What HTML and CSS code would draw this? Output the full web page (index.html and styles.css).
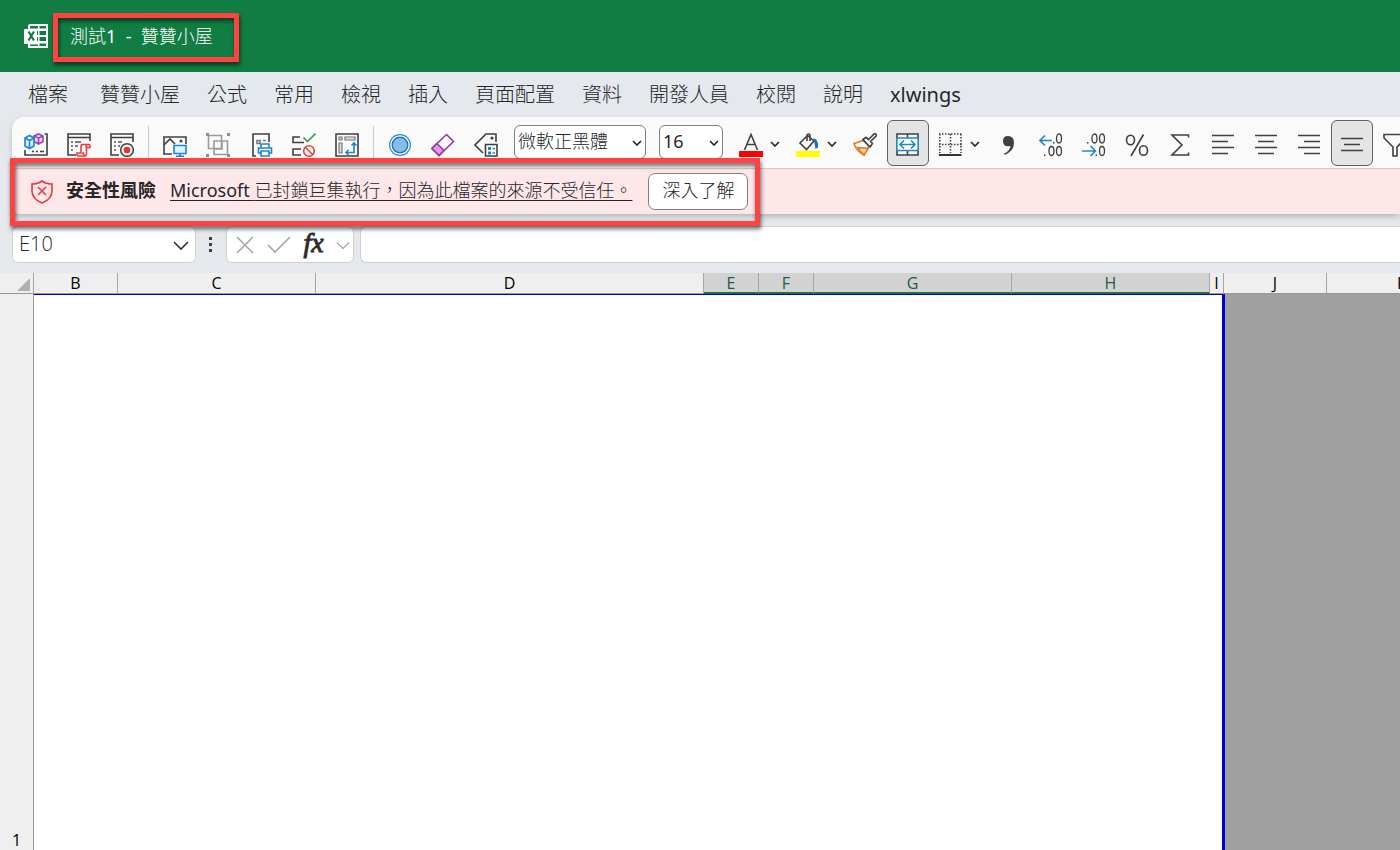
FILE: index.html
```html
<!DOCTYPE html>
<html lang="zh-Hant">
<head>
<meta charset="utf-8">
<title>測試1 - 贊贊小屋</title>
<link rel="stylesheet" href="styles.css">
</head>
<body>
<div class="app">
  <header class="titlebar">
    <svg class="logo" viewBox="0 0 24 24" width="24" height="24" aria-hidden="true">
      <path fill="#fff" d="M6 0h18v24H4v-4H1q-1 0-1-1V6q0-1 1-1h3V2q0-2 2-2z"/>
      <path fill="#117d43" d="M6 2h8v2.500H6zM15.500 2H22v2.500h-6.500zM15.500 7H22v4h-6.500zM15.500 13H22v4h-6.500zM15.500 19.500H22V22h-6.500zM6 20.500h8V22H6z"/>
      <path fill="none" stroke="#117d43" stroke-width="2.200" d="M4.500 7.500l5.500 9M10 7.500l-5.500 9"/>
      <path fill="#117d43" d="M13 7h1v4h-1zM13 13h1v4h-1z"/>
    </svg>
    <h1 class="doc-title">測試<span class="latin">1  -  </span>贊贊小屋<span class="marker marker-title"></span></h1>
  </header>

  <nav class="tabs">
    <a href="#" class="tab tab-file">檔案</a>
    <a href="#" class="tab">贊贊小屋</a>
    <a href="#" class="tab">公式</a>
    <a href="#" class="tab">常用</a>
    <a href="#" class="tab">檢視</a>
    <a href="#" class="tab">插入</a>
    <a href="#" class="tab">頁面配置</a>
    <a href="#" class="tab">資料</a>
    <a href="#" class="tab">開發人員</a>
    <a href="#" class="tab">校閱</a>
    <a href="#" class="tab">說明</a>
    <a href="#" class="tab latin">xlwings</a>
  </nav>

  <div class="panel">
    <div class="toolbar">
      <button class="tool" aria-label="增益集"><svg class="icon" viewBox="0 0 24 24">
        <path d="M20.500 1H23v21H1v-5M8 18.500h2M12 18.500h2M16 18.500h4" stroke="#404040"/>
        <path d="M10 3l4.500-2L19 3v5.500l-4.500 2.500L10 8.500zM10 3l4.500 2L19 3M14.500 5v6" fill="#f0dcf5" stroke="#a33fb5"/>
        <path d="M1 5l4.500-2.500L10 5v8l-4.500 2.500L1 13zM1 5l4.500 2.500L10 5M5.500 7.500v8" fill="#d9edf9" stroke="#1b87cc"/>
      </svg></button>
      <button class="tool" aria-label="檢視程式碼"><svg class="icon" viewBox="0 0 24 24">
        <path d="M9 22H1V1h22v7M1 4.500h22" stroke="#404040"/>
        <path d="M4 9h2M8 9h6M4 13h2M8 13h3M4 17h2" stroke="#555"/>
        <path d="M14 11.500h7.500q2 0 1.500 3h-3.500v6q0 2.500-2 2.500h-6q-2 0-1.500-3h4v-6q0-2.500 2-2.500zM15 20h1.500q0 3 2 3M19 14.500q0-3 2-3" fill="#fff" stroke="#ee3b3b"/>
      </svg></button>
      <button class="tool" aria-label="錄製巨集"><svg class="icon" viewBox="0 0 24 24">
        <path d="M9 22H1V1h22v8M1 4.500h22" stroke="#404040"/>
        <path d="M4 9h2M8 9h4M4 13h2M8 13h2M4 17h2" stroke="#555"/>
        <circle cx="17" cy="17" r="6.300" fill="#fff" stroke="#404040" stroke-width="1.500"/>
        <circle cx="17" cy="17" r="3.300" fill="#ee3131"/>
      </svg></button>
      <span class="sep"></span>
      <button class="tool" aria-label="攝影"><svg class="icon" viewBox="0 0 24 24">
        <path d="M9 21H1V4h22v7M1 12l6-6 5 5" stroke="#404040"/>
        <circle cx="18" cy="8" r="1.500" fill="#404040"/>
        <path d="M11 12.500h12v8H11z" fill="#dff1fc" stroke="#1b87cc"/><path d="M17 21v2M13 23.200h8" stroke="#1b87cc"/>
      </svg></button>
      <button class="tool" aria-label="群組"><svg class="icon" viewBox="0 0 24 24">
        <path d="M2.500 2.500h13v13h-13zM8 8h8v8H8zM8 8h13.500v13.500H8z" stroke="#9a9a9a"/>
        <path d="M0 0h3v3H0zM21 0h3v3h-3zM0 21h3v3H0zM21 21h3v3h-3z" fill="#8f8f8f"/>
      </svg></button>
      <button class="tool" aria-label="列印"><svg class="icon" viewBox="0 0 24 24">
        <path d="M7 23H4V1h16v8" stroke="#404040"/>
        <path d="M8 7.500h3v3H8zM14 7.500h3" stroke="#777"/>
        <path d="M12 15v-4h8v4M12 20H9.500v-5h13v5H20M12 18h8v5h-8z" fill="#fff" stroke="#1b87cc"/>
      </svg></button>
      <button class="tool" aria-label="核取"><svg class="icon" viewBox="0 0 24 24">
        <path d="M8 4H1v5.500h11M9 16H1v6h8" stroke="#404040"/>
        <path d="M11.500 4.500l4 4L23.500.500" stroke="#34a05a"/>
        <circle cx="17" cy="18" r="5.300" fill="#fff" stroke="#ee3b3b"/><path d="M13.200 14.200l7.600 7.600" stroke="#ee3b3b"/>
      </svg></button>
      <button class="tool" aria-label="樞紐分析表"><svg class="icon" viewBox="0 0 24 24">
        <path d="M1 1h22v22H1z" stroke="#404040"/>
        <path d="M4 4h3v3H4zM10 4h10v3H10zM4 10h3v10H4z" fill="#ddd" stroke="#777" stroke-width="1.200"/>
        <path d="M19 10v9.500h-8M16.500 12.500L19 10l2.500 2.500M13.500 17L11 19.500l2.500 2.500" stroke="#1b87cc"/>
      </svg></button>
      <span class="sep"></span>
      <button class="tool" aria-label="圖形"><svg class="icon" viewBox="0 0 24 24">
        <circle cx="12" cy="12" r="10.400" fill="#fff" stroke="#2b8fd0" stroke-width="1.200"/>
        <circle cx="12" cy="12" r="7.800" fill="#83bdec" stroke="#1b75bb" stroke-width="1.400"/>
      </svg></button>
      <button class="tool" aria-label="清除"><svg class="icon" viewBox="0 0 24 24">
        <path d="M15.500 1.500L22.500 8.500 8 22.500 1 15.500z" fill="#fff" stroke="#9a35a5"/>
        <path d="M6 10.500l7 7-5 5-7-7z" fill="#d99be0" stroke="#9a35a5"/>
      </svg></button>
      <button class="tool" aria-label="標籤"><svg class="icon" viewBox="0 0 24 24">
        <path d="M9 20L1 12 12 1h10v8" stroke="#404040"/>
        <circle cx="18" cy="5" r="1.600" fill="#404040"/>
        <path d="M11.500 11.500h11.500V23H11.500z" fill="#fff" stroke="#404040"/>
        <path d="M14 14h3v3h-3zM14 18.500h3v3h-3zM18.500 14.800h2.500v1.500h-2.500zM18.500 19.300h2.500v1.500h-2.500z" fill="#1b87cc"/>
      </svg></button>
      <span class="pick pick-font">
        <select class="pick-select" aria-label="字型"><option>微軟正黑體</option></select>
        <svg class="chev pick-chev" viewBox="0 0 10 6"><path d="M1 1l4 4 4-4"/></svg>
      </span>
      <span class="pick pick-size">
        <select class="pick-select latin" aria-label="字型大小"><option>16</option></select>
        <svg class="chev pick-chev" viewBox="0 0 10 6"><path d="M1 1l4 4 4-4"/></svg>
      </span>
      <button class="tool tool-menu" aria-label="字型色彩"><svg class="icon" viewBox="0 0 24 24">
        <path d="M5.500 17L12 1.500 18.500 17M7.800 11.500h8.400" stroke="#404040"/>
        <path d="M0 18h24v6H0z" fill="#f00"/>
      </svg><svg class="chev" viewBox="0 0 10 6"><path d="M1 1l4 4 4-4"/></svg></button>
      <button class="tool tool-menu" aria-label="填滿色彩"><svg class="icon" viewBox="0 0 24 24">
        <path d="M18 8L10.500 16.500 4 10l7.500-7.500zM11 8V3q0-2 1.500-2T14 3v5" stroke="#404040"/>
        <path d="M17 5.500q5.500 0 5 9l-2.500 1.500-1-6z" fill="#1b6fb5"/>
        <path d="M0 18h24v6H0z" fill="#ff0"/>
      </svg><svg class="chev" viewBox="0 0 10 6"><path d="M1 1l4 4 4-4"/></svg></button>
      <button class="tool" aria-label="複製格式"><svg class="icon" viewBox="0 0 24 24">
        <path d="M10 7.500L1 10.500q2 7 10 11.500l5-9z" fill="#fff" stroke="#e07a1c"/>
        <path d="M5 14.500l10 1-4 6.500q-4-3-6-7.500z" fill="#fbd9a5" stroke="#e07a1c"/>
        <path d="M10 6.500l3-2.200 2.500 2.400L21 1q2-1 2.500 1.500L17.500 8.500l2 2-2.500 3.500z" fill="#fff" stroke="#404040"/>
      </svg></button>
      <button class="tool tool-on" aria-label="跨欄置中" aria-pressed="true"><svg class="icon" viewBox="0 0 24 24">
        <path d="M1 1h21v21H1zM11.500 1v21" fill="#f7f7f7" stroke="#404040"/>
        <path d="M.800 5h21.400v12.500H.800z" fill="#fff" stroke="#1b87cc"/>
        <path d="M4 11.500h15M8 7.500l-4 4 4 4M15 7.500l4 4-4 4" stroke="#1b87cc"/>
      </svg></button>
      <button class="tool tool-menu" aria-label="框線"><svg class="icon" viewBox="0 0 24 24">
        <path d="M0 1h23M0 11.500h23M.800 1v19M11.500 1v19M22 1v19" stroke="#404040" stroke-dasharray="1.500 1.500"/>
        <path d="M0 22h22.500" stroke="#000"/>
      </svg><svg class="chev" viewBox="0 0 10 6"><path d="M1 1l4 4 4-4"/></svg></button>
      <button class="tool" aria-label="千分位樣式"><svg class="icon" viewBox="0 0 24 24">
        <path d="M12 3q6 0 6 7 0 8-9.500 12l-.500-1.200Q14 18 14.500 13 7 14.500 7 8q0-5 5-5z" fill="#404040"/>
      </svg></button>
      <button class="tool" aria-label="增加小數位數"><svg class="icon" viewBox="0 0 24 24">
        <path d="M13 7.500H1.500M6 2.500l-5 5 5 5" stroke="#1b87cc"/>
        <g stroke="#404040" stroke-width="1.300"><ellipse cx="20" cy="5.500" rx="2.500" ry="4.500"/><ellipse cx="12.500" cy="18" rx="2.500" ry="4.500"/><ellipse cx="20" cy="18" rx="2.500" ry="4.500"/></g>
        <path d="M14 9h1.500v1.500H14zM5 21.500h1.500V23H5z" fill="#404040"/>
      </svg></button>
      <button class="tool" aria-label="減少小數位數"><svg class="icon" viewBox="0 0 24 24">
        <path d="M0 18h13M8.500 13l5 5-5 5" stroke="#1b87cc"/>
        <g stroke="#404040" stroke-width="1.300"><ellipse cx="12.500" cy="5.500" rx="2.500" ry="4.500"/><ellipse cx="20" cy="5.500" rx="2.500" ry="4.500"/><ellipse cx="20" cy="18" rx="2.500" ry="4.500"/></g>
        <path d="M5 9h1.500v1.500H5zM13.500 21.500H15V23h-1.500z" fill="#404040"/>
      </svg></button>
      <button class="tool" aria-label="百分比樣式"><svg class="icon" viewBox="0 0 24 24">
        <path d="M18.500 1.500L6 23" stroke="#404040"/>
        <ellipse cx="5.500" cy="7" rx="4" ry="4.800" stroke="#404040"/><ellipse cx="18.500" cy="17.500" rx="4" ry="4.800" stroke="#404040"/>
      </svg></button>
      <button class="tool" aria-label="自動加總"><svg class="icon" viewBox="0 0 24 24">
        <path d="M20.500 4.500v-2.500H4L14 12 4 22h16.500v-2.500" stroke="#404040"/>
      </svg></button>
      <button class="tool" aria-label="靠左對齊"><svg class="icon" viewBox="0 0 24 24"><path d="M1 2.500h22M1 8.500h16M1 14.500h22M1 20.500h16" stroke="#404040"/></svg></button>
      <button class="tool" aria-label="置中"><svg class="icon" viewBox="0 0 24 24"><path d="M1 2.500h22M4 8.500h16M1 14.500h22M4 20.500h16" stroke="#404040"/></svg></button>
      <button class="tool" aria-label="靠右對齊"><svg class="icon" viewBox="0 0 24 24"><path d="M1 2.500h22M7 8.500h16M1 14.500h22M7 20.500h16" stroke="#404040"/></svg></button>
      <button class="tool tool-on" aria-label="置中對齊" aria-pressed="true"><svg class="icon" viewBox="0 0 24 24"><path d="M1 5.500h22M4 11.500h16M1 17.500h22" stroke="#404040"/></svg></button>
      <button class="tool" aria-label="篩選"><svg class="icon" viewBox="0 0 24 24"><path d="M1 1.500h22V5l-9 9v9h-4v-9L1 5z" stroke="#404040"/></svg></button>
    </div>

    <div class="alert" role="alert">
      <svg class="shield" viewBox="0 0 22 24" aria-hidden="true">
        <path d="M11 1q4 3 10 3v7q0 8-10 12Q1 19 1 11V4q6 0 10-3z"/>
        <path d="M7 7l8 8M15 7l-8 8"/>
      </svg>
      <strong class="alert-title">安全性風險</strong>
      <a href="#" class="alert-link"><span class="latin">Microsoft </span>已封鎖巨集執行，因為此檔案的來源不受信任。</a>
      <button class="alert-button">深入了解</button>
      <span class="marker marker-alert"></span>
    </div>
  </div>

  <div class="formula-row">
    <div class="box name-box">
      <input class="name-input" aria-label="名稱方塊" value="E10">
      <button class="plain" aria-label="名稱清單"><svg class="glyph" viewBox="0 0 16 16"><path d="M1 5l7 7 7-7"/></svg></button>
    </div>
    <span class="dots"><i class="dot"></i><i class="dot"></i><i class="dot"></i></span>
    <div class="box fx-box">
      <button class="plain" aria-label="取消"><svg class="glyph faint" viewBox="0 0 20 20"><path d="M2 2l16 16M18 2L2 18"/></svg></button>
      <button class="plain" aria-label="輸入"><svg class="glyph faint check" viewBox="0 0 24 20"><path d="M1 10l7 7L23 2"/></svg></button>
      <button class="plain fx" aria-label="插入函數">fx</button>
      <button class="plain" aria-label="函數清單"><svg class="glyph faint small" viewBox="0 0 16 16"><path d="M1 5l7 7 7-7"/></svg></button>
    </div>
    <input class="box formula-input" aria-label="資料編輯列">
  </div>

  <main class="sheet">
    <table class="grid">
      <colgroup>
        <col class="c-head"><col class="c-b"><col class="c-c"><col class="c-d"><col class="c-e"><col class="c-e"><col class="c-c"><col class="c-c"><col class="c-i"><col class="c-j"><col class="c-k">
      </colgroup>
      <thead>
        <tr>
          <th class="corner"><svg class="corner-mark" viewBox="0 0 13 13"><path d="M13 0v13H0z"/></svg></th>
          <th>B</th><th>C</th><th>D</th>
          <th class="sel">E</th><th class="sel">F</th><th class="sel">G</th><th class="sel">H</th>
          <th>I</th><th>J</th><th>K</th>
        </tr>
      </thead>
      <tbody>
        <tr>
          <th class="row-head">1</th>
          <td></td><td></td><td></td><td></td><td></td><td></td><td></td>
          <td class="page-end"></td><td class="outside page-edge"></td><td class="outside"></td>
        </tr>
      </tbody>
    </table>
  </main>
</div>
</body>
</html>
```
FILE: styles.css
```css
* {
  box-sizing: border-box;
}

body {
  margin: 0;
  color: #262626;
  font-family: "Open Sans", "Noto Sans CJK TC", sans-serif;
  font-size: 18px;
  font-weight: 300;
}

button,
input,
select {
  font: inherit;
  color: inherit;
}

.app {
  display: flex;
  flex-direction: column;
  height: 100vh;
  overflow: hidden;
  background: #e5e9ee;
}

/* Title bar */
.titlebar {
  display: flex;
  align-items: center;
  flex: none;
  height: 72px;
  padding-left: 24px;
  gap: 22px;
  background: #117d43;
  color: #fff;
}

.logo {
  flex: none;
}

.doc-title {
  position: relative;
  margin: 0;
  font-size: 18px;
  font-weight: 300;
  line-height: 24px;
  white-space: pre;
}

.latin {
  font-family: "Noto Sans", "Noto Sans CJK TC", sans-serif;
  font-weight: 400;
}

.marker {
  position: absolute;
  z-index: 2;
  border: 5px solid #ff4242;
  filter: drop-shadow(1px 3px 2px rgba(0, 0, 0, 0.6));
  pointer-events: none;
}

.marker-title {
  inset: -11px -26px -14px -17px;
}

/* Ribbon tabs */
.tabs {
  display: flex;
  flex: none;
  gap: 27px;
  height: 45px;
  padding-left: 28px;
  font-size: 20px;
  line-height: 46px;
  white-space: nowrap;
}

.tab {
  color: #262626;
  text-decoration: none;
}

.tab-file {
  margin-right: 5px;
}

/* Toolbar and alert */
.panel {
  flex: none;
  margin-left: 12px;
  border-radius: 12px 0 0 8px;
  background: #fafafa;
  box-shadow: 0 3px 6px -1px rgba(0, 0, 0, 0.25);
}

.toolbar {
  display: flex;
  align-items: flex-start;
  gap: 1px;
  height: 51px;
  padding: 3px 0 0 3px;
  overflow: hidden;
}

.tool {
  display: flex;
  align-items: center;
  flex: none;
  height: 46px;
  padding: 3px 8px 0;
  border: 1px solid transparent;
  border-radius: 6px;
  background: none;
}

.tool-on {
  border-color: #606060;
  background: #e4e4e4;
}

.tool-menu {
  gap: 7px;
  padding-right: 5px;
}

.icon {
  width: 24px;
  height: 24px;
  fill: none;
  stroke-width: 1.6;
}

.chev {
  width: 10px;
  height: 6px;
  fill: none;
  stroke: #222;
  stroke-width: 1.6;
}

.tool-menu .chev {
  margin-bottom: 2px;
}

.sep {
  flex: none;
  width: 1px;
  height: 34px;
  margin: 6px 4px 0;
  background: #c8c8c8;
}

.pick {
  position: relative;
  flex: none;
  height: 34px;
  margin: 5px 6px 0;
}

.pick-font {
  width: 132px;
}

.pick-size {
  width: 64px;
}

.pick-select {
  appearance: none;
  width: 100%;
  height: 100%;
  padding: 0 0 2px 3px;
  border: 1px solid #808080;
  border-radius: 6px;
  background: #fff;
}

.pick-chev {
  position: absolute;
  right: 4px;
  top: 15px;
}

.alert {
  position: relative;
  display: flex;
  align-items: center;
  height: 46px;
  padding-left: 19px;
  border-top: 1px solid #d2c8c9;
  border-radius: 0 0 0 8px;
  background: #fde7e9;
  line-height: 24px;
  white-space: nowrap;
}

.shield {
  flex: none;
  width: 22px;
  height: 24px;
  margin-right: 13px;
  fill: none;
  stroke: #e8393d;
  stroke-width: 1.6;
}

.alert-title {
  margin-right: 14px;
  padding-bottom: 3px;
  font-weight: 700;
}

.alert-link {
  margin-right: 16px;
  padding-bottom: 3px;
  color: #262626;
  text-underline-offset: 3px;
  text-decoration-thickness: 1px;
}

.alert-button {
  width: 100px;
  height: 37px;
  padding: 0 0 4px;
  border: 1px solid #808080;
  border-radius: 7px;
  background: #fff;
}

.marker-alert {
  top: -11px;
  left: -2px;
  width: 750px;
  height: 68px;
}

/* Formula bar */
.formula-row {
  display: flex;
  align-items: center;
  flex: none;
  height: 37px;
  margin: 12px 0 10px 12px;
}

.box {
  display: flex;
  align-items: center;
  height: 37px;
  border: 1px solid #d0d0d0;
  border-radius: 6px;
  background: #fff;
}

.name-box {
  width: 184px;
  padding: 0 6px;
}

.name-input {
  flex: 1;
  min-width: 0;
  padding: 0 0 2px;
  border: 0;
  background: none;
  font-size: 20px;
}

.plain {
  display: flex;
  align-items: center;
  padding: 0;
  border: 0;
  background: none;
}

.glyph {
  width: 16px;
  height: 20px;
  fill: none;
  stroke: #333;
  stroke-width: 1.6;
}

.faint {
  width: 20px;
  stroke: #a6a6a6;
}

.check {
  width: 24px;
}

.small {
  width: 14px;
}

.dots {
  display: flex;
  flex-direction: column;
  gap: 3px;
  margin: 0 14px 0 13px;
}

.dot {
  width: 3px;
  height: 3px;
  background: #404040;
}

.fx-box {
  justify-content: space-between;
  width: 128px;
  padding: 0 3px 0 8px;
}

.fx {
  padding-bottom: 3px;
  font-family: "Liberation Serif", serif;
  font-size: 28px;
  font-style: italic;
  font-weight: 400;
  -webkit-text-stroke: 1px #333;
}

.formula-input {
  flex: 1;
  min-width: 0;
  margin-left: 6px;
  padding: 0 8px;
  border-right: 0;
  border-radius: 6px 0 0 6px;
}

/* Worksheet */
.sheet {
  flex: 1;
  min-height: 0;
  overflow: hidden;
}

.grid {
  width: 1478px;
  height: 100%;
  table-layout: fixed;
  border-collapse: separate;
  border-spacing: 0;
  color: #000;
  font-size: 16px;
}

.c-head { width: 34px; }
.c-b { width: 84px; }
.c-c { width: 198px; }
.c-d { width: 388px; }
.c-e { width: 55px; }
.c-i { width: 14px; }
.c-j { width: 103px; }
.c-k { width: 151px; }

.grid th,
.grid td {
  padding: 0;
  font-weight: 400;
}

.grid thead th {
  height: 21px;
  border-right: 1px solid #a6a6a6;
  border-bottom: 1px solid #999;
  background: #efefef;
  line-height: 19px;
}

.grid thead .sel {
  border-bottom: 2px solid #1e7145;
  background: #d2d2d2;
  color: #1e5c3e;
  line-height: 18px;
}

.corner-mark {
  display: block;
  width: 13px;
  height: 13px;
  margin: 3px 3px 0 auto;
  fill: #b0b0b0;
}

.grid .row-head {
  border-right: 1px solid #999;
  background: #efefef;
  line-height: 20px;
  vertical-align: bottom;
}

.grid td {
  border-top: 1px solid #0000d0;
  background: #fff;
}

.grid .page-end {
  border-right: 2px solid #0000d0;
}

.grid .outside {
  border-top: 0;
  background: #a0a0a0;
}

.grid .page-edge {
  border-left: 1px solid #0000d0;
}
```
